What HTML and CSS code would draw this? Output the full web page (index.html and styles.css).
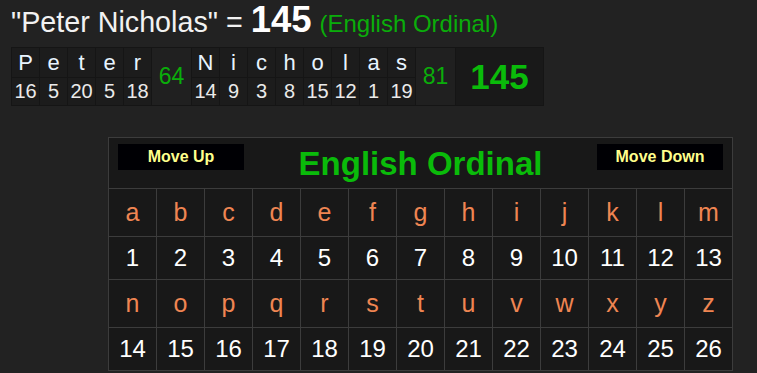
FILE: index.html
```html
<!DOCTYPE html>
<html>
<head>
<meta charset="utf-8">
<link rel="stylesheet" href="styles.css">
</head>
<body>
<div class="page">
  <div class="title">"Peter Nicholas" = <span class="total">145</span> <span class="cipher">(English Ordinal)</span></div>
  <table class="breakdown">
    <tr class="letters">
      <td class="c">P</td><td class="c">e</td><td class="c">t</td><td class="c">e</td><td class="c">r</td>
      <td class="sum" rowspan="2">64</td>
      <td class="c">N</td><td class="c">i</td><td class="c">c</td><td class="c">h</td><td class="c">o</td><td class="c">l</td><td class="c">a</td><td class="c">s</td>
      <td class="sum" rowspan="2">81</td>
      <td class="grand" rowspan="2">145</td>
    </tr>
    <tr class="nums">
      <td>16</td><td>5</td><td>20</td><td>5</td><td>18</td>
      <td>14</td><td>9</td><td>3</td><td>8</td><td>15</td><td>12</td><td>1</td><td>19</td>
    </tr>
  </table>

  <div class="chart-wrap">
    <table class="chart">
      <tr class="head">
        <td colspan="13">
          <div class="head-row">
            <button class="btn">Move Up</button>
            <span class="chart-title">English Ordinal</span>
            <button class="btn">Move Down</button>
          </div>
        </td>
      </tr>
      <tr class="lrow">
        <td>a</td><td>b</td><td>c</td><td>d</td><td>e</td><td>f</td><td>g</td><td>h</td><td>i</td><td>j</td><td>k</td><td>l</td><td>m</td>
      </tr>
      <tr class="nrow">
        <td>1</td><td>2</td><td>3</td><td>4</td><td>5</td><td>6</td><td>7</td><td>8</td><td>9</td><td>10</td><td>11</td><td>12</td><td>13</td>
      </tr>
      <tr class="lrow">
        <td>n</td><td>o</td><td>p</td><td>q</td><td>r</td><td>s</td><td>t</td><td>u</td><td>v</td><td>w</td><td>x</td><td>y</td><td>z</td>
      </tr>
      <tr class="nrow">
        <td>14</td><td>15</td><td>16</td><td>17</td><td>18</td><td>19</td><td>20</td><td>21</td><td>22</td><td>23</td><td>24</td><td>25</td><td>26</td>
      </tr>
    </table>
  </div>
</div>
</body>
</html>
```

FILE: styles.css
```css
html, body {
  margin: 0;
  padding: 0;
  background: #222222;
  height: 100%;
  overflow: hidden;
}
.page {
  padding: 4px 0 0 11px;
  font-family: "Liberation Sans", Arial, sans-serif;
  color: #ffffff;
}
.title {
  font-size: 28.7px;
  line-height: 32px;
  height: 36px;
  color: #f2f2f2;
  white-space: nowrap;
}
.title .total {
  font-size: 36.5px;
  line-height: 32px;
  font-weight: bold;
  color: #ffffff;
}
.title .cipher {
  font-size: 24px;
  color: #0aad0a;
}
.breakdown {
  margin-top: 7px;
  border-collapse: collapse;
  background: #1c1c1c;
}
.breakdown td {
  border: 1px solid #151515;
  text-align: center;
  padding: 0;
  color: #eaeaea;
}
.breakdown .letters td.c {
  width: 27px;
  height: 29px;
  font-size: 22px;
  color: #e8f4ff;
}
.breakdown .nums td {
  height: 27px;
  font-size: 20px;
}
.breakdown td.sum {
  width: 39px;
  background: #202020;
  color: #0aad0a;
  font-size: 23px;
}
.breakdown td.grand {
  width: 87px;
  background: #191919;
  color: #0abb0a;
  font-size: 35px;
  font-weight: bold;
}
.chart-wrap {
  margin-top: 31px;
  padding-left: 97px;
}
.chart {
  border-collapse: collapse;
  background: #181818;
  border: 1px solid #484848;
}
.chart td {
  border: 1px solid #3c3c3c;
  width: 47px;
  padding: 0;
  text-align: center;
}
.chart .head td {
  height: 50px;
  vertical-align: top;
}
.head-row {
  display: flex;
  align-items: flex-start;
  justify-content: space-between;
  padding: 6px 9px 0 9px;
}
.btn {
  width: 126px;
  height: 26px;
  background: #000004;
  border: none;
  color: #ffff8c;
  font-family: "Liberation Sans", Arial, sans-serif;
  font-weight: bold;
  font-size: 16px;
  padding: 0;
}
.chart-title {
  color: #0abb0a;
  font-size: 33px;
  font-weight: bold;
  line-height: 36px;
  margin-top: 2px;
}
.chart .lrow td {
  height: 47px;
  color: #ef8552;
  font-size: 25px;
}
.chart .nrow td {
  height: 42px;
  color: #ffffff;
  font-size: 24px;
}
```
